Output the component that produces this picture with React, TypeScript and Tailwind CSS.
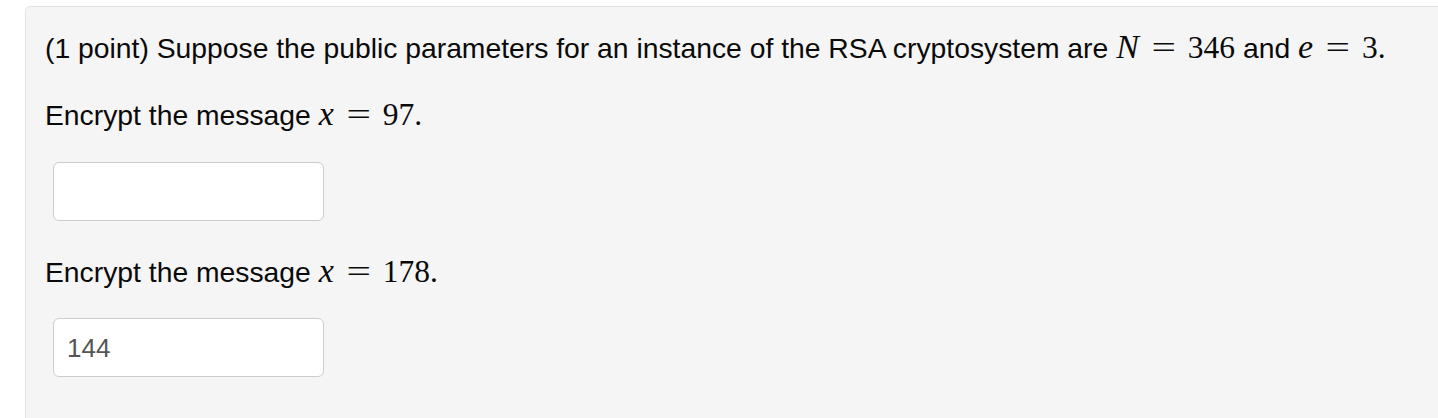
import React from "react";

const serif = { fontFamily: '"Liberation Serif", "Times New Roman", serif' };

const V = ({ children }: { children: React.ReactNode }) => (
  <span className="text-[34px] italic" style={serif}>
    {children}
  </span>
);

const D = ({ children }: { children: React.ReactNode }) => (
  <span className="text-[31.5px]" style={serif}>
    {children}
  </span>
);

const Eq = () => (
  <span className="mx-[13px] inline-block w-[23px] text-center text-[31px]" style={serif}>
    <span className="inline-block scale-x-[1.4]">=</span>
  </span>
);

export default function App() {
  return (
    <div className="h-[418px] w-[1438px] overflow-hidden bg-white pl-[25px] pt-[6px]">
      <div
        className="h-[440px] w-[1440px] rounded-[5px] border border-[#e3e3e3] bg-[#f5f5f5] pl-[19px] pt-[22px] text-[28.3px] leading-[36px] text-[#0a0a0a]"
        style={{ fontFamily: '"Liberation Sans", Arial, sans-serif' }}
      >
        <p className="whitespace-nowrap">
          (1 point) Suppose the public parameters for an instance of the RSA cryptosystem are{" "}
          <V>N</V>
          <Eq />
          <D>346</D> and <V>e</V>
          <Eq />
          <D>3.</D>
        </p>
        <p className="mt-[30px] whitespace-nowrap">
          Encrypt the message <V>x</V>
          <Eq />
          <D>97.</D>
        </p>
        <div className="ml-[8px] mt-[29px] h-[59px] w-[271px] rounded-[6px] border border-[#cccccc] bg-white"></div>
        <p className="mt-[32px] whitespace-nowrap">
          Encrypt the message <V>x</V>
          <Eq />
          <D>178.</D>
        </p>
        <div className="ml-[8px] mt-[28px] flex h-[59px] w-[271px] items-center rounded-[6px] border border-[#cccccc] bg-white pl-[13px] text-[26px] text-[#555555]">
          144
        </div>
      </div>
    </div>
  );
}
